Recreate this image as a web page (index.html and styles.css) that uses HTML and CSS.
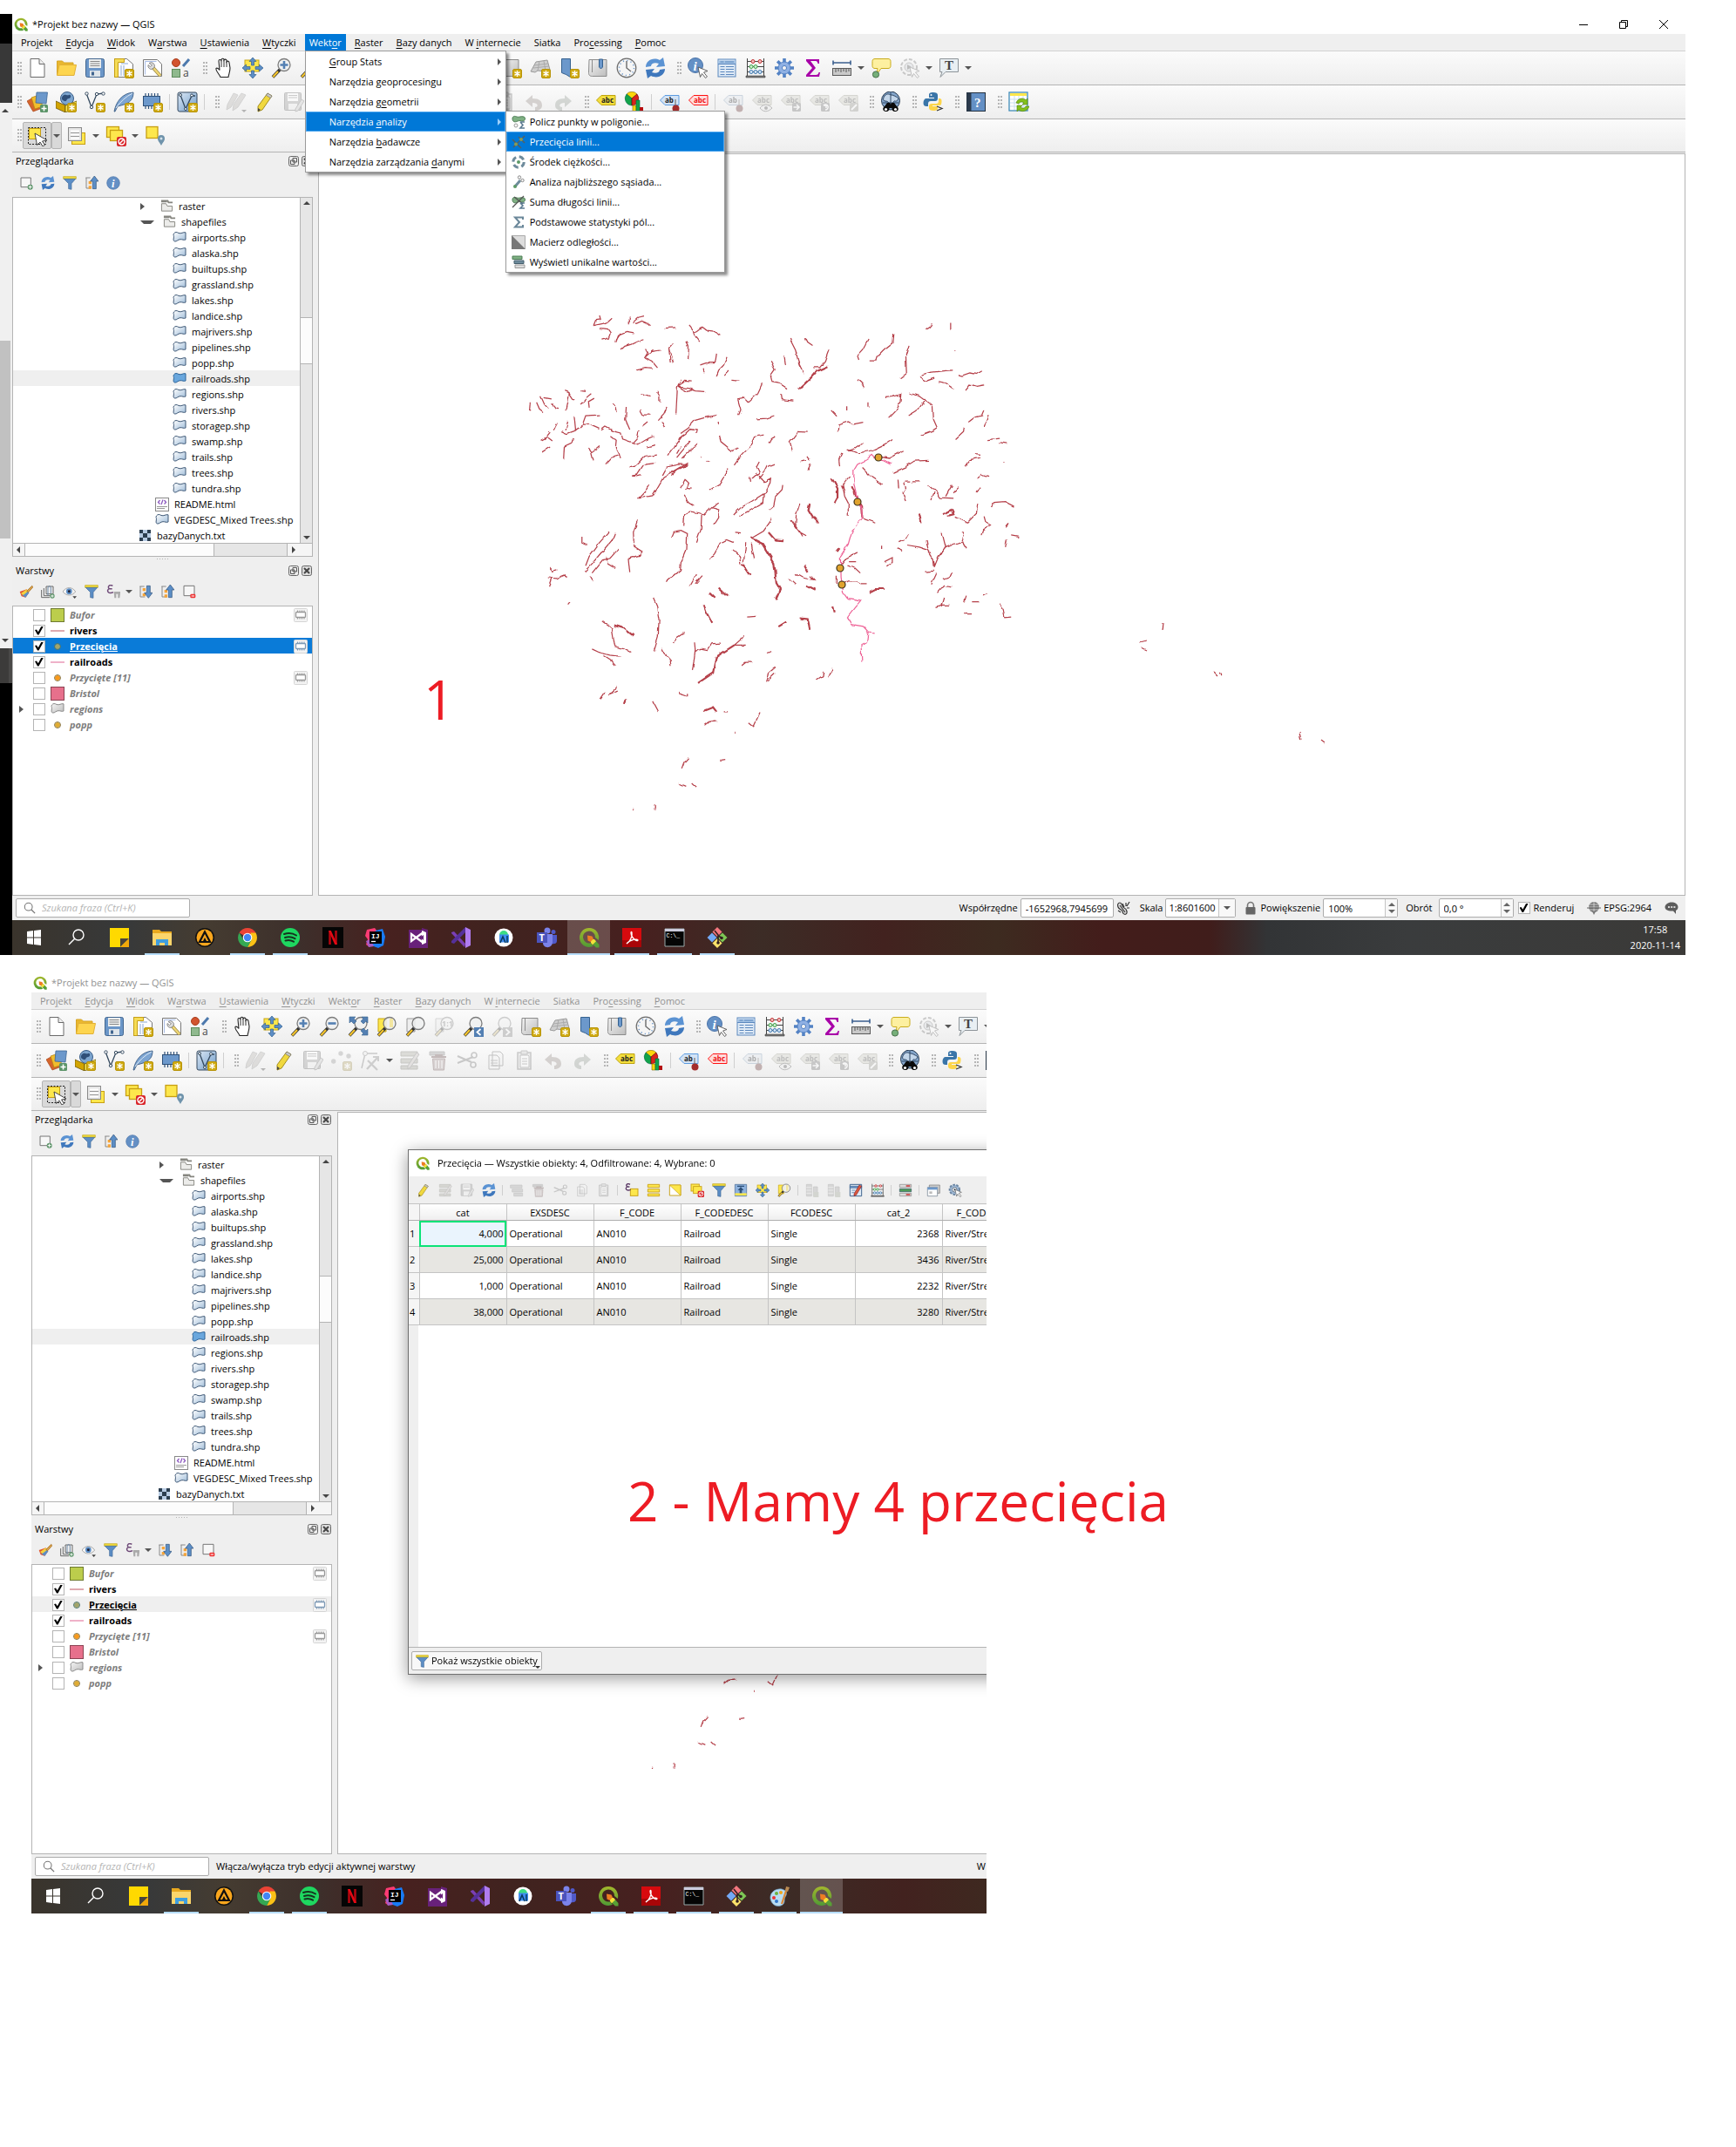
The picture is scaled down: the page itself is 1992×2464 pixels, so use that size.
FILE: index.html
```html
<!DOCTYPE html>
<html lang="pl">
<head>
<meta charset="utf-8">
<title>QGIS – przecięcia linii</title>
<link rel="stylesheet" href="styles.css">
</head>
<body>
<svg class="sprite" aria-hidden="true">
<defs>
<linearGradient id="gq" x1="0" y1="0" x2="0" y2="1"><stop offset="0" stop-color="#a3b82c"/><stop offset="1" stop-color="#4f9a35"/></linearGradient>
<linearGradient id="gs" x1="0" y1="0" x2="1" y2="1"><stop offset="0" stop-color="#fff"/><stop offset="1" stop-color="#9dbbd8"/></linearGradient>
<linearGradient id="gg" x1="0" y1="0" x2="1" y2="1"><stop offset="0" stop-color="#f4f4f4"/><stop offset="1" stop-color="#bdbdbd"/></linearGradient>
<linearGradient id="gv" x1="0" y1="0" x2="1" y2="1"><stop offset="0" stop-color="#dce8f5"/><stop offset="1" stop-color="#6f9bc8"/></linearGradient>
<filter id="rough" x="0" y="0" width="100%" height="100%"><feTurbulence type="fractalNoise" baseFrequency="0.12" numOctaves="1" seed="4"/><feDisplacementMap in="SourceGraphic" scale="5" xChannelSelector="R" yChannelSelector="G"/></filter>
</defs>
<symbol id="badge" viewBox="0 0 24 24"><rect x="13.5" y="13.5" width="10" height="10" rx="1.5" fill="#d0ab12" stroke="#b8940a"/><path d="M18.500 15v7M15.500 16.700l6 3.600M15.500 20.300l6-3.600" stroke="#fff" stroke-width="1.400"/></symbol>
<symbol id="mag" viewBox="0 0 24 24"><path d="M10.500 13.500L2 22.500" stroke="#333" stroke-width="3.600"/><path d="M8 16L2.300 22.200" stroke="#f5c52c" stroke-width="2.200"/><circle cx="15" cy="8.500" r="7" fill="#eef0f0" fill-opacity=".85" stroke="#7c7c7c" stroke-width="1.300"/></symbol>
<symbol id="qgis" viewBox="0 0 24 24"><path d="M12 1a11 11 0 1 0 5 20.800l-3.500-3.500A7 7 0 1 1 19 12l3.800 3A11 11 0 0 0 12 1z" fill="url(#gq)"/><path d="M14 14l4 0 5.500 6v3.500h-3.500L14 18z" fill="#58a036"/><path d="M14 14h4l2 2.200-4 4-2-2.200z" fill="#f3e03a"/><path d="M10 9.500l5.500 1 1.500 3-3.500 3.500-3-1.500z" fill="#ee7d22"/></symbol>
<symbol id="new" viewBox="0 0 24 24"><path d="M4 1.500h10l6 6v15H4z" fill="#fff" stroke="#6a6a6a"/><path d="M14 1.500v6h6" fill="#eee" stroke="#6a6a6a"/></symbol>
<symbol id="open" viewBox="0 0 24 24"><path d="M1.500 20V4h6l2 2H20v4" fill="#e9b72f" stroke="#d6a527"/><path d="M1.500 20.500L4 8.500h19.500L21 20.500z" fill="#fdd54f" stroke="#e2b135"/></symbol>
<symbol id="save" viewBox="0 0 24 24"><rect x="1.500" y="1.500" width="21" height="21" rx="2" fill="#6b96c8" stroke="#42668f"/><rect x="5" y="2" width="14" height="10" fill="#eceeee"/><path d="M6.500 4.500h11M6.500 7h11M6.500 9.500h11" stroke="#888"/><rect x="6" y="15" width="12" height="7" fill="#dfe5ea"/><rect x="8" y="16.500" width="3" height="4" fill="#42668f"/></symbol>
<symbol id="layout" viewBox="0 0 24 24"><path d="M1.500 1.500h14l7 6v15h-21z" fill="#fff" stroke="#777"/><path d="M1.500 1.500h11v4h-7v17h-4z" fill="#f5dc57" stroke="#c79f13"/><path d="M9 7h8M9 9v12M12 9v12" stroke="#8ba9d6"/><use href="#badge"/></symbol>
<symbol id="layman" viewBox="0 0 24 24"><path d="M1.500 2.500h16l5 5v14h-21z" fill="#fff" stroke="#777"/><path d="M3.500 19.500v-15h13" fill="none" stroke="#a9bde6"/><path d="M12 11l9 10" stroke="#9c8a4a" stroke-width="4"/><path d="M13 12l8 9" stroke="#f0d774" stroke-width="2.400"/><path d="M8 6.500a4 4 0 0 1 6 5l-3 2a4 4 0 0 1-4-5l2.500 2 2-1.800z" fill="#ddd" stroke="#777" stroke-width=".8"/></symbol>
<symbol id="style" viewBox="0 0 24 24"><circle cx="6" cy="6" r="4.500" fill="#d2542f" stroke="#a83d1d"/><rect x="1.500" y="13.500" width="9" height="9" fill="#8fb98e" stroke="#5c8a5b"/><path d="M14 10l7-8" stroke="#4d79ad" stroke-width="3"/><text x="14" y="22" font-size="12" font-family="Open Sans" fill="#444">a</text></symbol>
<symbol id="pan" viewBox="0 0 24 24"><path d="M8 22.500C6 18 2 15 3 12.500c1-1 3 .5 4 2L6 4c0-2 2.500-2 3 0V2.500c.5-2 3-1.500 3 0V3c1-1.500 3-1 3 .5V5c1-1.500 3-1 3 1l1 6c0 4-1.500 7-2 10.500z" fill="#fff" stroke="#222" stroke-width="1.100"/><path d="M9 4v7M12 3v8M15 5v6" stroke="#333"/></symbol>
<symbol id="pansel" viewBox="0 0 24 24"><rect x="3" y="3" width="16" height="13" fill="#fde74c" stroke="#c7a615"/><path d="M12 0l4 4.500h-2.500V9h-3V4.500H8zM12 24l4-4.500h-2.500V15h-3v4.500H8zM0 12l4.500-4v2.500H9v3H4.500V16zM24 12l-4.500-4v2.500H15v3h4.500V16z" fill="#5c8ec6" stroke="#35618f" stroke-width=".7"/></symbol>
<symbol id="zoom-in" viewBox="0 0 24 24"><use href="#mag"/><path d="M15 4v9M10.500 8.500h9" stroke="#5480b3" stroke-width="2.600"/></symbol>
<symbol id="zoom-out" viewBox="0 0 24 24"><use href="#mag"/><path d="M10.500 8.500h9" stroke="#5480b3" stroke-width="2.600"/></symbol>
<symbol id="zoom-full" viewBox="0 0 24 24"><use href="#mag"/><path d="M2 1h7L7 3l3 3-3 3-3-3-2 2zM23 1v7l-2-2-3 3-3-3 3-3-2-2zM23 22h-7l2-2-3-3 3-3 3 3 2-2z" fill="#5480b3" stroke="#35618f" stroke-width=".6"/></symbol>
<symbol id="zoom-sel" viewBox="0 0 24 24"><path d="M2 3h9v15H2z" fill="#fde74c" stroke="#c7a615"/><use href="#mag"/><path d="M15 3h4v10h-4z" fill="#f3e6a0"/></symbol>
<symbol id="zoom-layer" viewBox="0 0 24 24"><path d="M2 3h9v15H2z" fill="#eee" stroke="#999"/><use href="#mag"/></symbol>
<symbol id="zoom-native" viewBox="0 0 24 24"><path d="M2 3h9v15H2z" fill="#eee" stroke="#999"/><use href="#mag"/><text x="9" y="12" font-size="9" font-weight="700" font-family="Open Sans" fill="#777">1:1</text></symbol>
<symbol id="zoom-last" viewBox="0 0 24 24"><use href="#mag"/><rect x="13" y="13" width="11" height="11" fill="#5480b3"/><path d="M20.500 15l-4 3.500 4 3.500" stroke="#fff" stroke-width="1.800" fill="none"/></symbol>
<symbol id="zoom-next" viewBox="0 0 24 24"><use href="#mag"/><rect x="13" y="13" width="11" height="11" fill="#888"/><path d="M16.500 15l4 3.500-4 3.500" stroke="#fff" stroke-width="1.800" fill="none"/></symbol>
<symbol id="mapview" viewBox="0 0 24 24"><path d="M2 2.500h18v19H5.500c-4 0-4-3-4-4z" fill="url(#gg)" stroke="#8b8b8b"/><path d="M5.500 3v14" stroke="#8b8b8b"/><use href="#badge"/></symbol>
<symbol id="map3d" viewBox="0 0 24 24"><path d="M1 16L7 5l13-2 3 11-6 2-8-1-3 2z" fill="#cfcfcf" stroke="#9a9a9a"/><path d="M5 9l16-2M4 12l18-2M11 4l-2 11M16 4l2 11" stroke="#aaa" fill="none"/><use href="#badge"/></symbol>
<symbol id="bookmark-new" viewBox="0 0 24 24"><path d="M3.500 1.500h10v21l-5-3-5-2z" fill="#6c98cb" stroke="#35618f"/><use href="#badge"/></symbol>
<symbol id="bookmarks" viewBox="0 0 24 24"><path d="M2 2.500h20v19H5.500c-4 0-4-3-4-4z" fill="url(#gg)" stroke="#8b8b8b"/><path d="M5.500 3v14" stroke="#8b8b8b"/><path d="M13.500 2h4v9l-2 2-2-2z" fill="#6c98cb" stroke="#35618f"/></symbol>
<symbol id="clock" viewBox="0 0 24 24"><circle cx="12" cy="12" r="10.800" fill="#f5f5f5" stroke="#6b6b6b" stroke-width="1.200"/><circle cx="12" cy="12" r="8.500" fill="none" stroke="#6c98cb" stroke-width="1.500" stroke-dasharray="1.200 3.250"/><path d="M12 4v8l5 4" fill="none" stroke="#6b6b6b" stroke-width="1.400"/></symbol>
<symbol id="refresh" viewBox="0 0 24 24"><path d="M1 11C1 4 9-1 17 3l4-3 2 10-10 1 3-4C11 5 7 7 7 10z" fill="#5b93d3"/><path d="M23 13c0 7-8 12-16 8l-4 3-2-10 10-1-3 4c5 2 9 0 9-3z" fill="#3f78bd"/></symbol>
<symbol id="identify" viewBox="0 0 24 24"><circle cx="9" cy="9" r="8.500" fill="#6490c5" stroke="#4a73a8"/><text x="6.500" y="15" font-size="15" font-weight="700" font-style="italic" font-family="Liberation Serif" fill="#fff">i</text><use href="#arrowcur"/></symbol>
<symbol id="arrowcur" viewBox="0 0 24 24"><path d="M12 11l11 4.500-4.500 1.500 4 5-2 1.500-4-5-2 4z" fill="#fff" stroke="#555" stroke-width=".9"/></symbol>
<symbol id="table" viewBox="0 0 24 24"><rect x="2" y="2" width="20" height="20" fill="#dfeaf6" stroke="#5b87bd"/><path d="M2 3.500h20v4H2z" fill="#a3c2e4"/><path d="M2 7.500h20" stroke="#5b87bd"/><path d="M4.500 5h4M10 5h10M4.500 10.500h5M4.500 13.500h5M4.500 16.500h5M4.500 19.500h5M11 10.500h9M11 13.500h9M11 16.500h9M11 19.500h9" stroke="#5b87bd"/></symbol>
<symbol id="abacus" viewBox="0 0 24 24"><path d="M2.500 1v20M21.500 1v20M2.500 4.500h19M2.500 10.500h19M2.500 16.500h19" stroke="#444" fill="none"/><path d="M1 21h22v2H1z" fill="#777" stroke="#444" stroke-width=".6"/><g fill="#f3c2c2" stroke="#c22f2f"><circle cx="9" cy="4.500" r="2"/><circle cx="17" cy="4.500" r="2"/></g><g fill="#cff0cf" stroke="#3fa04a"><circle cx="7" cy="10.500" r="2"/><circle cx="12" cy="10.500" r="2"/></g><g fill="#d3e4f5" stroke="#3d78b0"><circle cx="7" cy="16.500" r="2"/><circle cx="12" cy="16.500" r="2"/><circle cx="17" cy="16.500" r="2"/></g></symbol>
<symbol id="gear" viewBox="0 0 24 24"><g stroke="#5382c4" stroke-width="3.600"><path d="M12 1v22M1 12h22M4.200 4.200l15.600 15.600M19.800 4.200L4.200 19.800"/></g><circle cx="12" cy="12" r="7" fill="#8fb0e3" stroke="#5382c4"/><circle cx="12" cy="12" r="2.600" fill="#f2f2f2" stroke="#5382c4"/></symbol>
<symbol id="sigma" viewBox="0 0 24 24"><path d="M4 2h15v5h-1.500C17 4.500 16 4 14 4H9l6 8-7 8h7c2.500 0 3-1 3.500-3H20l-1 5H4v-2l7-8-7-8z" fill="#a800a8"/></symbol>
<symbol id="measure" viewBox="0 0 24 24"><path d="M2 6h20M2 3.500v5M22 3.500v5" stroke="#3b5f8f" stroke-width="1.600"/><rect x="1.500" y="12.500" width="21" height="8" fill="#c9c9c9" stroke="#5a5a5a"/><path d="M5 13v4M8 13v3M11 13v4M14 13v3M17 13v4M20 13v3" stroke="#555"/></symbol>
<symbol id="tip" viewBox="0 0 24 24"><path d="M5 1.500h15c2 0 3 1 3 3v5c0 2-1 3-3 3h-8l-5 7 1-7H5c-2 0-3-1-3-3v-5c0-2 1-3 3-3z" fill="#fdf0a0" stroke="#c9ac1c"/><circle cx="6" cy="19.500" r="3.600" fill="#76b07a" stroke="#47704a"/></symbol>
<symbol id="action" viewBox="0 0 24 24"><circle cx="11" cy="11" r="9" fill="#f2f2f2" stroke="#777" stroke-width="2" stroke-dasharray="4 2"/><circle cx="11" cy="11" r="5" fill="#ccd6e3" stroke="#777"/><path d="M9 8l5 3-5 3z" fill="#555"/><use href="#arrowcur"/></symbol>
<symbol id="textann" viewBox="0 0 24 24"><path d="M1.500 1.500h21v15H8L2 22.500l2-6H1.500z" fill="#e9eff3" stroke="#8d9499"/><text x="7" y="14" font-size="15" font-family="Liberation Serif" font-weight="700" fill="#444">T</text></symbol>
<symbol id="sources" viewBox="0 0 24 24"><path d="M0 11l9-5 6 14-8 3z" fill="#d5652b" stroke="#a8461c" stroke-width=".7"/><path d="M5 7l9-3 4 13-9 3z" fill="#f1bd2e" stroke="#b4870f" stroke-width=".7"/><path d="M11 1h12.500l-1.500 13-12-1z" fill="#6c98cb" stroke="#3e6796" stroke-width=".8"/><rect x="15" y="15" width="9" height="9" rx="1.500" fill="#5b9468"/><path d="M19.500 16.500v6M16.500 19.500h6" stroke="#fff" stroke-width="1.600"/></symbol>
<symbol id="geopackage" viewBox="0 0 24 24"><circle cx="13" cy="8" r="7.500" fill="#7ea6cf" stroke="#3a5e88"/><path d="M8 5c3-3 4 0 7-1s3 4 0 4-2 4-5 3-4-3-2-6z" fill="#2f4f78"/><path d="M0 11l11 5v8L0 19z" fill="#d2a400" stroke="#5a4700" stroke-width=".7"/><path d="M11 16l13-5v8l-13 5z" fill="#fde74c" stroke="#5a4700" stroke-width=".7"/><use href="#badge"/></symbol>
<symbol id="shapefile" viewBox="0 0 24 24"><path d="M2 2l6 16L14 3l8-1" fill="none" stroke="#34495e" stroke-width="1.300"/><g fill="#fff" stroke="#34495e"><circle cx="2.500" cy="2.500" r="1.700"/><circle cx="14" cy="3" r="1.700"/><circle cx="21.500" cy="2.500" r="1.700"/><circle cx="8" cy="18" r="1.700"/></g><use href="#badge"/></symbol>
<symbol id="feather" viewBox="0 0 24 24"><path d="M1 23C3 12 10 2 23 1c0 6-2 9-6 12-4 2-8 3-12 4L2 23z" fill="#7da5d2" stroke="#2e5078" stroke-width=".8"/><path d="M3 19C8 12 14 6 22 2" stroke="#dfeaf6" fill="none"/><use href="#badge"/></symbol>
<symbol id="memory" viewBox="0 0 24 24"><path d="M4 2v18M7.500 2v18M11 2v18M14.500 2v18M18 2v18" stroke="#2e5078" stroke-width="1.200"/><rect x="1.500" y="5.500" width="19" height="11" fill="#6c98cb" stroke="#2e5078"/><use href="#badge"/></symbol>
<symbol id="virtual" viewBox="0 0 24 24"><rect x="1" y="1" width="22" height="22" rx="2" fill="url(#gv)" stroke="#34495e"/><path d="M4 4l6 16L17 5h4" fill="none" stroke="#34495e" stroke-width="1.300"/><g fill="#fff" stroke="#34495e"><circle cx="4" cy="4" r="1.500"/><circle cx="17" cy="4.500" r="1.500"/><circle cx="10" cy="20" r="1.500"/></g><use href="#badge"/></symbol>
<symbol id="pencil" viewBox="0 0 24 24"><path d="M15 2l5 3L9 21l-5 2 0-6z" fill="#f0d83f" stroke="#9a8414" stroke-width=".9"/><path d="M15 2l5 3-1.500 2.500-5-3z" fill="#c9c9c9" stroke="#777" stroke-width=".7"/><path d="M4 19l3 2-3 2z" fill="#444"/></symbol>
<symbol id="pencils" viewBox="0 0 24 24"><path d="M9 2l5 2L6 18l-5 3 1-6zM18 2l5 2-9 14-6 4 1-7z" fill="#b9b2a7" stroke="#8c8c8c" stroke-width=".9"/><path d="M18 21h6l-3 3z" fill="#444"/></symbol>
<symbol id="save-edits" viewBox="0 0 24 24"><rect x="1.500" y="1.500" width="19" height="20" rx="1" fill="#999" stroke="#666"/><rect x="5" y="2" width="12" height="9" fill="#fff"/><path d="M6 4.500h10M6 7h10" stroke="#777"/><rect x="6" y="14" width="10" height="7" fill="#eee"/><path d="M21 9l3 2-7 11-3 1v-3z" fill="#ccc" stroke="#777"/></symbol>
<symbol id="add-point" viewBox="0 0 24 24"><g fill="#999"><circle cx="2.700" cy="13" r="2.700"/><circle cx="11" cy="4" r="2.700"/><circle cx="20" cy="7" r="2.700"/></g><use href="#badge"/></symbol>
<symbol id="vertex" viewBox="0 0 24 24"><path d="M2 21L6 4h14" fill="none" stroke="#777" stroke-width="1.400"/><circle cx="6" cy="4" r="2.500" fill="#eee" stroke="#777"/><path d="M9 12l11 11M20 9L8 22" stroke="#888" stroke-width="2.400"/><path d="M15 8l6 0 0 5" stroke="#888" stroke-width="2" fill="none"/></symbol>
<symbol id="multiedit" viewBox="0 0 24 24"><path d="M2 2h19v5H2zM2 10h19v5H2zM2 18h19v4H2z" fill="#aaa98d" stroke="#77765f"/><path d="M20 3l3 2-10 15-3 2v-4z" fill="#cbbdb4" stroke="#777"/></symbol>
<symbol id="trash" viewBox="0 0 24 24"><path d="M2 2h17v4H2z" fill="#999" stroke="#777"/><path d="M4 8h17M9 8V6h7v2" stroke="#844" stroke-width="1.800" fill="none"/><path d="M5.500 10h14l-1 13h-12z" fill="#b98f8f" stroke="#844"/><path d="M9 12v9M12.500 12v9M16 12v9" stroke="#fff"/></symbol>
<symbol id="cut" viewBox="0 0 24 24"><path d="M1 7l16 7M1 15l18-7" stroke="#777" stroke-width="2"/><circle cx="20" cy="6" r="3" fill="none" stroke="#777" stroke-width="1.600"/><circle cx="19" cy="17" r="3" fill="none" stroke="#777" stroke-width="1.600"/></symbol>
<symbol id="copy" viewBox="0 0 24 24"><path d="M8 2h9l3 3v13H8zM4 6h9l3 3v13H4z" fill="#f5f5f5" stroke="#666"/><path d="M6 12h8M6 15h8M6 18h8" stroke="#777"/></symbol>
<symbol id="paste" viewBox="0 0 24 24"><path d="M4 3h15v19H4z" fill="#ddd" stroke="#777" stroke-width="1.500"/><path d="M7 6h9l1 1v13H7z" fill="#fff" stroke="#777"/><path d="M8 1h7v4H8z" fill="#ccc" stroke="#777"/><path d="M9 10h6M9 13h6M9 16h6" stroke="#777"/></symbol>
<symbol id="undo" viewBox="0 0 24 24"><path d="M2 11l8-7v4c8 0 11 3 11 8 0 4-4 6-8 6v-4c4 0 4-5-3-5v5z" fill="#a48e80"/></symbol>
<symbol id="redo" viewBox="0 0 24 24"><path d="M22 11l-8-7v4c-8 0-11 3-11 8 0 4 4 6 8 6v-4c-4 0-4-5 3-5v5z" fill="#8fa08f"/></symbol>
<symbol id="tag" viewBox="0 0 24 24"><path d="M7 4.500h16v11H7L1.500 10z"/></symbol>
<symbol id="label" viewBox="0 0 24 24"><use href="#tag" fill="#f3de3c" stroke="#bda20e"/><text x="7" y="13" font-size="8" font-weight="700" font-family="Open Sans" fill="#222">abc</text></symbol>
<symbol id="label-pin" viewBox="0 0 24 24"><use href="#tag" fill="#d3e3f5" stroke="#5b9be0"/><text x="7" y="13" font-size="8" font-weight="700" font-family="Open Sans" fill="#222">ab</text><path d="M19 9v9" stroke="#888" stroke-width="1.500"/><circle cx="19.500" cy="19.500" r="4" fill="#a32b2b"/></symbol>
<symbol id="label-red" viewBox="0 0 24 24"><use href="#tag" fill="#fdd" stroke="#f11"/><text x="7" y="13" font-size="8" font-weight="700" font-family="Open Sans" fill="#e11">abc</text></symbol>
<symbol id="label-show" viewBox="0 0 24 24"><use href="#tag" fill="#cfcfb4" stroke="#99997a"/><text x="7" y="13" font-size="8" font-weight="700" font-family="Open Sans" fill="#555">abc</text><path d="M10 19c4-5 9-5 14 0-5 5-10 5-14 0z" fill="#eee" stroke="#555"/><circle cx="17" cy="19" r="2" fill="#555"/></symbol>
<symbol id="label-move" viewBox="0 0 24 24"><use href="#tag" fill="#cfcfb4" stroke="#99997a"/><text x="7" y="13" font-size="8" font-weight="700" font-family="Open Sans" fill="#555">abc</text><rect x="14" y="13" width="10" height="10" rx="1.500" fill="#777"/><path d="M15.500 18h6M19 15l3 3-3 3" stroke="#fff" stroke-width="1.500" fill="none"/></symbol>
<symbol id="label-rotate" viewBox="0 0 24 24"><use href="#tag" fill="#cfcfb4" stroke="#99997a"/><text x="7" y="13" font-size="8" font-weight="700" font-family="Open Sans" fill="#555">abc</text><rect x="14" y="13" width="10" height="10" rx="1.500" fill="#777"/><path d="M17 16a3 3 0 1 1 2 5M17 16h3v3" stroke="#fff" stroke-width="1.500" fill="none"/></symbol>
<symbol id="label-edit" viewBox="0 0 24 24"><use href="#tag" fill="#cfcfb4" stroke="#99997a"/><text x="7" y="13" font-size="8" font-weight="700" font-family="Open Sans" fill="#555">abc</text><rect x="14" y="13" width="10" height="10" rx="1.500" fill="#998"/><path d="M16 21l6-6" stroke="#fff" stroke-width="2"/></symbol>
<symbol id="diagram" viewBox="0 0 24 24"><path d="M9 8L3 3a8 8 0 0 1 12 0z" fill="#fdd60a" stroke="#7a6500" stroke-width=".6"/><path d="M9 8v8A8 8 0 0 1 3 3z" fill="#12a34a" stroke="#064" stroke-width=".6"/><path d="M9 8l6-5a8 8 0 0 1-6 13z" fill="#d9241c" stroke="#600" stroke-width=".6"/><path d="M10 16h4v7h-4z" fill="#fdd60a" stroke="#7a6500" stroke-width=".6"/><path d="M14 10h4v13h-4z" fill="#12a34a" stroke="#064" stroke-width=".6"/><path d="M18 18h4v5h-4z" fill="#b51010"/></symbol>
<symbol id="metasearch" viewBox="0 0 24 24"><circle cx="12" cy="10.500" r="10.500" fill="#86a7cc" stroke="#23364d"/><path d="M5 5c4-4 6-1 8-1s5 2 7 3-1 5-3 4-2 4-5 3-3-3-6-3-3-3-1-6zM3 13h18M12 1v18" fill="#c3d6ea" stroke="#2f4662"/><path d="M5 17l3-4h3l1 2 1-2h3l3 4c3 2 2 6-1.500 6s-4-2-4-4h-3c0 2-.5 4-4 4S2 19 5 17z" fill="#0b0b0b"/><circle cx="6.500" cy="20.500" r="1.600" fill="#fff"/><circle cx="17.500" cy="20.500" r="1.600" fill="#fff"/></symbol>
<symbol id="python" viewBox="0 0 24 24"><path d="M12 1C8 1 7 2 7 4v3h6v1H4c-2 0-3.500 2-3.500 5S2 17 4 17h2v-3c0-2 1-3 3-3h5c2 0 3-1 3-3V4c0-2-2-3-5-3z" fill="#3a75a8"/><circle cx="9.500" cy="4" r="1" fill="#fff"/><path d="M12 22c4 0 5-1 5-3v-2h-6v-1h8c2 0 2.500-2 2.500-5S20 8 18 8v3c0 2-1 3-3 3h-5c-2 0-3 1-3 3v2c0 2 2 3 5 3z" fill="#fdd54a"/><path d="M16 17l6 2.500-6 2.500" stroke="#333" stroke-width="1.300" fill="none"/></symbol>
<symbol id="help" viewBox="0 0 24 24"><rect x="1.500" y="1.500" width="21" height="21" fill="#6490c5" stroke="#23303f"/><path d="M1.500 1.500h5v21h-5z" fill="#2b3a4c"/><text x="10" y="18" font-size="15" font-family="Liberation Serif" font-weight="700" fill="#fff">?</text></symbol>
<symbol id="reload" viewBox="0 0 24 24"><rect x="1" y="1" width="21" height="21" fill="#fff" stroke="#3f8bb8" stroke-width="1.300"/><path d="M2 2h19v3H2z" fill="#fde74c"/><path d="M2 9h19M2 13h19M2 17h19M7 5v16M12 5v16M17 5v16" stroke="#c9dff0"/><path d="M9 13c2-6 9-6 11-3l2-2v7h-6l2-2c-3-2-5-1-6 1zM24 17c-2 6-9 7-12 4l-2 2v-7h6l-2 2c3 2 5 1 6-1z" fill="#83c01c" stroke="#4d7d08" stroke-width=".6"/></symbol>
<symbol id="select" viewBox="0 0 24 24"><rect x="1.500" y="2.500" width="20" height="19" fill="none" stroke="#222" stroke-dasharray="2 1.500"/><rect x="2.500" y="3.500" width="13" height="12" fill="#fde74c" stroke="#c79f13"/><path d="M9 9l14 8-5.500 1 3 4.500-2.500 1.500-3-5-3.500 3.500z" fill="#fff" stroke="#333" stroke-width=".9"/></symbol>
<symbol id="select-value" viewBox="0 0 24 24"><rect x="6.500" y="8.500" width="15" height="13" fill="#fde74c" stroke="#c79f13"/><rect x="2.500" y="2.500" width="15" height="15" fill="#e6e6e6" stroke="#8a8a8a"/><path d="M5 6.500h10M5 10.500h10M5 14.500h10" stroke="#fff" stroke-width="2"/><path d="M5 8.500h10M5 12.500h10" stroke="#999"/></symbol>
<symbol id="deselect" viewBox="0 0 24 24"><rect x="1.500" y="1.500" width="14" height="12" fill="#fde74c" stroke="#c79f13" stroke-width="1.300"/><rect x="5.500" y="5.500" width="14" height="12" fill="#fde74c" stroke="#c79f13" stroke-width="1.300"/><rect x="13" y="13" width="11" height="11" rx="2" fill="#d9252a"/><circle cx="18.500" cy="18.500" r="3.500" fill="none" stroke="#fff" stroke-width="1.400"/><path d="M16 21l5-5" stroke="#fff" stroke-width="1.400"/></symbol>
<symbol id="select-location" viewBox="0 0 24 24"><rect x="2" y="1.500" width="13" height="13" fill="#fde74c" stroke="#c79f13" stroke-width="1.300"/><path d="M19 23c-2-4-4-5-4-8a4 4 0 0 1 8 0c0 3-2 4-4 8z" fill="#6f93ab"/><circle cx="19" cy="15" r="1.500" fill="#d5e2ea"/></symbol>
<symbol id="add-layer" viewBox="0 0 24 24"><path d="M3 3h17v16H3z" fill="#f7f7f7" stroke="#777" stroke-width="1.500"/><circle cx="19" cy="19" r="4.500" fill="#5b9468"/><path d="M19 16v6M16 19h6" stroke="#fff" stroke-width="1.500"/></symbol>
<symbol id="remove-layer" viewBox="0 0 24 24"><path d="M3 2h18v17H3z" fill="#f7f7f7" stroke="#777" stroke-width="1.500"/><rect x="14" y="16" width="9" height="7" rx="2" fill="#e33"/><path d="M16 19.500h5" stroke="#fff" stroke-width="1.600"/></symbol>
<symbol id="filter" viewBox="0 0 24 24"><path d="M1 1h22v4H1z" fill="#f3de3c" stroke="#c0a41a"/><path d="M2 5h20l-7 8v10l-5-1v-9z" fill="#5c8ec6" stroke="#3e6796"/></symbol>
<symbol id="collapse" viewBox="0 0 24 24"><path d="M2 3h8M3 3v18h8" stroke="#888" stroke-width="1.500" fill="none"/><path d="M7 9h5v5H7zM7 17h5v5H7z" fill="#f6a53a"/><path d="M17 0l7 9h-4v13h-6V9h-4z" fill="#5c8ec6" stroke="#2e5078"/></symbol>
<symbol id="expand" viewBox="0 0 24 24"><path d="M2 3h8M3 3v18h8" stroke="#888" stroke-width="1.500" fill="none"/><path d="M7 6h5v5H7zM7 15h5v5H7z" fill="#f6a53a"/><path d="M17 23l7-9h-4V2h-6v12h-4z" fill="#5c8ec6" stroke="#2e5078"/></symbol>
<symbol id="info" viewBox="0 0 24 24"><circle cx="12" cy="12" r="11" fill="#6490c5" stroke="#4a73a8"/><text x="9" y="19" font-size="19" font-weight="700" font-style="italic" font-family="Liberation Serif" fill="#fff">i</text></symbol>
<symbol id="brush" viewBox="0 0 24 24"><path d="M1 12l12-4 4 6-6 8-7-2z" fill="#e2572f"/><path d="M5 18l9-8 3 4-6 8z" fill="#5c8ec6"/><path d="M3 15l10-7 3 3-9 7z" fill="#f4d13e"/><path d="M13 11l9-9 2 2-8 9z" fill="#d9a04c" stroke="#9c6a1d"/></symbol>
<symbol id="add-group" viewBox="0 0 24 24"><path d="M1 9v13h14M5 6v13h13" stroke="#666" stroke-width="1.500" fill="none"/><path d="M9 3h12v13H9z" fill="#eee" stroke="#666" stroke-width="1.500"/><path d="M12 18V6c0-5 5-5 5 0v9" stroke="#6f8ba8" stroke-width="1.500" fill="none"/><circle cx="19.500" cy="19.500" r="4" fill="#5b9468"/><path d="M19.500 17v5M17 19.500h5" stroke="#fff" stroke-width="1.400"/></symbol>
<symbol id="eye" viewBox="0 0 24 24"><path d="M0 12C6 3 16 3 22 12c-6 8-16 8-22 0z" fill="#f3f3f3" stroke="#aaa" stroke-width="1.500"/><circle cx="11" cy="11.500" r="5" fill="#5c8ec6"/><circle cx="11" cy="11.500" r="2.200" fill="#223"/><path d="M17 20h7l-3.500 4z" fill="#444"/></symbol>
<symbol id="epsilon" viewBox="0 0 24 24"><path d="M11 2C6-1 1 3 5 7c-6 3-1 10 7 6M5 7h5" fill="none" stroke="#6f4a78" stroke-width="2.200"/><path d="M13 12h11v3l-1 8h-3v-7h-3v7h-3z" fill="#aaa"/></symbol>
<symbol id="float" viewBox="0 0 12 12"><rect x=".5" y=".5" width="11" height="11" rx="2" fill="#eee" stroke="#666"/><path d="M5 2.500h4.500V7H5zM2.500 5H7v4.500H2.500z" fill="#eee" stroke="#555"/></symbol>
<symbol id="close" viewBox="0 0 12 12"><rect x=".5" y=".5" width="11" height="11" rx="2" fill="#ddd" stroke="#666"/><path d="M3 3l6 6M9 3L3 9" stroke="#444" stroke-width="2"/></symbol>
<symbol id="folder" viewBox="0 0 16 16"><path d="M1 1h8l1 2h5M1 2h7" stroke="#85857f" stroke-width="2" fill="none"/><path d="M1.500 13.500v-9H7l1.500 3h6v6z" fill="#ececea" stroke="#85857f"/></symbol>
<symbol id="shp" viewBox="0 0 16 16"><path d="M1.500 3C3 1 5 1.200 7 2.500c3 1.200 5-1.500 8-.700V10c-2 1-4-.500-6-.300-3 0-4 2.800-6.500 2.300C-.5 11 2.500 7.500 1 4.500z" fill="url(#gs)" stroke="#3e5876"/></symbol>
<symbol id="shp-on" viewBox="0 0 16 16"><path d="M1.500 3C3 1 5 1.200 7 2.500c3 1.200 5-1.500 8-.700V10c-2 1-4-.500-6-.300-3 0-4 2.800-6.500 2.300C-.5 11 2.500 7.500 1 4.500z" fill="#6aa7dd" stroke="#2c6398"/></symbol>
<symbol id="shp-gray" viewBox="0 0 16 16"><path d="M1.500 3C3 1 5 1.200 7 2.500c3 1.200 5-1.500 8-.700V10c-2 1-4-.500-6-.300-3 0-4 2.800-6.500 2.300C-.5 11 2.500 7.500 1 4.500z" fill="url(#gg)" stroke="#8a8a8a"/></symbol>
<symbol id="html" viewBox="0 0 16 16"><rect x=".5" y=".5" width="15" height="15" fill="#fff" stroke="#888"/><path d="M5.500 3L3.500 5.500l2 2M10.500 3l2 2.500-2 2M9 2.500L7 8" stroke="#8e5bc0" fill="none" stroke-width="1.300"/><path d="M2 10.500h12M2 12.500h9" stroke="#999"/></symbol>
<symbol id="grid" viewBox="0 0 13 13"><path d="M0 0h13v13H0z" fill="#b7cbe3"/><path d="M0 0h4v4H0zM9 0h4v4H9zM4 4h5v5H4zM0 9h4v4H0zM9 9h4v4H9z" fill="#2c3e50"/></symbol>
<symbol id="chip" viewBox="0 0 16 16"><rect x=".5" y=".5" width="15" height="15" rx="1" fill="#f3f3f3" stroke="#d5d5d5"/><path d="M4.500 2.500v10M7 2.500v10M9.500 2.500v10M12 2.500v10" stroke="currentColor"/><rect x="2.500" y="4.500" width="11" height="6" rx="1" fill="#fff" stroke="currentColor" stroke-width="1.300"/></symbol>
<symbol id="m-count" viewBox="0 0 16 16"><path d="M1 4c0-3 3-3 5-2s5-1 8 0 1 5-1 5-4-1-6 0-6 2-6-3z" fill="#7fb083" stroke="#4d7d55"/><circle cx="5" cy="12" r="2" fill="none" stroke="#999"/><path d="M10 8h5M10 8l3 3.500-3 3.500h5" stroke="#5d7c93" stroke-width="1.600" fill="none"/></symbol>
<symbol id="m-cross" viewBox="0 0 16 16"><path d="M1 5l10 10M2 14L15 1M8 2l7 7" stroke="#56605e" stroke-width="1.500"/><circle cx="5" cy="10.500" r="2" fill="#8a9a55"/><circle cx="11" cy="5" r="2" fill="#8a9a55"/></symbol>
<symbol id="m-mean" viewBox="0 0 16 16"><circle cx="8" cy="8" r="6.200" fill="none" stroke="#6f8c9c" stroke-width="3" stroke-dasharray="6 3.740"/><circle cx="8" cy="8" r="2" fill="#5d9a67"/></symbol>
<symbol id="m-near" viewBox="0 0 16 16"><path d="M4 13l6-7" stroke="#6f8c9c" stroke-width="3"/><circle cx="4" cy="13" r="2" fill="#5d9a67"/><circle cx="9" cy="2.500" r="1.700" fill="#fff" stroke="#888"/><circle cx="12.500" cy="6" r="1.700" fill="#fff" stroke="#888"/></symbol>
<symbol id="m-sum" viewBox="0 0 16 16"><path d="M1 5c0-3 3-3 5-2s5-1 8 0 1 5-1 5-4-1-6 0-6 2-6-3z" fill="#7fb083" stroke="#4d7d55"/><path d="M1 14L14 1M3 2l10 8" stroke="#555" stroke-width="1.300"/><path d="M10 9h5M10 9l3 3-3 3h5" stroke="#5d7c93" stroke-width="1.600" fill="none"/></symbol>
<symbol id="m-stat" viewBox="0 0 16 16"><path d="M13 5V2.500H4L9 8l-5 5.500h9V11" stroke="#6a8799" stroke-width="2" fill="none"/></symbol>
<symbol id="m-matrix" viewBox="0 0 16 16"><path d="M.5.500h15v15H.5z" fill="#ddd" stroke="#aaa"/><path d="M0 0l16 16H0z" fill="#777"/></symbol>
<symbol id="m-unique" viewBox="0 0 16 16"><path d="M1 1h11v3.500H1z" fill="#7fb083" stroke="#4d7d55"/><path d="M3 6h11v3.500H3z" fill="#6f8c9c" stroke="#46606e"/><path d="M4 11h11v3.500H4z" fill="#ddd" stroke="#999"/></symbol>
<symbol id="extent" viewBox="0 0 16 16"><path d="M4 2c3 0 2 5 5 6s4 6 2 7-4-1-4-3-4-2-5-5 0-5 2-5z" fill="#ddd" stroke="#333" stroke-width="1.200"/><path d="M4 5l6 8M7 3l2 4M11 2v4M15 1l-3 5M15 8h-3M2 11l3 2" stroke="#333" stroke-width="1.200"/></symbol>
<symbol id="lock" viewBox="0 0 16 16"><path d="M4.500 8V5a3.500 3.500 0 0 1 7 0v3" fill="none" stroke="#777" stroke-width="1.600"/><rect x="2.500" y="7" width="11" height="8.500" rx="1" fill="#666"/></symbol>
<symbol id="crs" viewBox="0 0 16 16"><circle cx="8" cy="7" r="6" fill="#777"/><path d="M2 7h12M8 1v12M3 4h10M3 10h10" stroke="#ddd" stroke-width=".8"/><path d="M0 8h16" stroke="#666"/><path d="M6 12h4l-2 4z" fill="#777"/></symbol>
<symbol id="bubble" viewBox="0 0 16 16"><path d="M8 1.500c4 0 7.500 2 7.500 5.500 0 2-1 3-2.500 4v4l-3-3.500C4 12 .5 10 .5 7S4 1.500 8 1.500z" fill="#5c5c5c"/><path d="M4 7h2M7.200 7h2M10.400 7h2" stroke="#fff" stroke-width="1.600"/></symbol>
<symbol id="lens" viewBox="0 0 24 24"><circle cx="14" cy="9" r="6" fill="none" stroke="currentColor" stroke-width="1.400"/><path d="M9.500 13.500L3 20" stroke="currentColor" stroke-width="1.400"/></symbol>
<symbol id="lens-left" viewBox="0 0 16 16"><circle cx="6.500" cy="6.500" r="5" fill="none" stroke="#777" stroke-width="1.200"/><path d="M10 10l5 5" stroke="#777" stroke-width="1.500"/></symbol>
<symbol id="field-new" viewBox="0 0 24 24"><path d="M2 2h9v20H2zM14 6h7v16h-7z" fill="#aaa" stroke="#777"/><path d="M2 7h9M2 12h9M2 17h9" stroke="#fff"/><rect x="14" y="15" width="9" height="9" fill="#9a8"/></symbol>
<symbol id="row-add" viewBox="0 0 24 24"><path d="M1 3h20v5H1zM4 10h18v5H4zM7 17h15v5H7z" fill="#aaa" stroke="#777"/></symbol>
<symbol id="expr-sel" viewBox="0 0 24 24"><rect x="9.500" y="9.500" width="13" height="12" fill="#fde74c" stroke="#c79f13" stroke-width="1.400"/><path d="M9 2C4-1 1 3 4 6c-5 3 0 8 6 5M4 6h4" fill="none" stroke="#5b3a66" stroke-width="2"/></symbol>
<symbol id="select-all" viewBox="0 0 24 24"><path d="M2 2h20v5H2zM2 10h20v5H2zM2 18h20v4H2z" fill="#fde74c" stroke="#c79f13" stroke-width="1.300"/></symbol>
<symbol id="invert" viewBox="0 0 24 24"><path d="M2 3h19v18H2z" fill="#fff" stroke="#c79f13" stroke-width="1.400"/><path d="M2 3h19v18z" fill="#fde74c" stroke="#c79f13"/></symbol>
<symbol id="to-top" viewBox="0 0 24 24"><path d="M2 2h20v20H2z" fill="#8db1dd" stroke="#42668f"/><path d="M2 17h20v4H2z" fill="#fde74c"/><path d="M6 4h12v2H6zM12 6l5 6h-3v5h-4v-5H7z" fill="#2e5078"/></symbol>
<symbol id="field-edit" viewBox="0 0 24 24"><path d="M2 2h20v20H2z" fill="#dfeaf6" stroke="#42668f" stroke-width="1.500"/><path d="M2 5h20v3H2zM5 12h6M5 16h5" fill="#6c98cb" stroke="#42668f"/><path d="M18 3l4 2-9 15-4 2v-4z" fill="#d9573c" stroke="#712" stroke-width=".8"/></symbol>
<symbol id="format" viewBox="0 0 24 24"><path d="M2 2h20v5H2zM2 17h20v5H2z" fill="#ddd" stroke="#888"/><path d="M2 9.500h20v5H2z" fill="#4c9b58" stroke="#356"/><path d="M13 4.500h7M13 19.500h7" stroke="#c33" stroke-width="2"/></symbol>
<symbol id="dock" viewBox="0 0 24 24"><path d="M5 3h18v14H5z" fill="#ccc" stroke="#777"/><path d="M2 7h17v15H2z" fill="#fff" stroke="#678"/><path d="M2 7h17v4H2z" fill="#6c98cb"/><path d="M5 14h5v4H5z" fill="#bbb"/></symbol>
<symbol id="act" viewBox="0 0 24 24"><circle cx="11" cy="11" r="8.500" fill="#9fb9d6" stroke="#6d87a3" stroke-width="3" stroke-dasharray="4 2"/><circle cx="11" cy="11" r="4" fill="#fff" stroke="#345"/><path d="M10 9l4 2-4 2z" fill="#234"/><use href="#arrowcur"/></symbol>
<symbol id="t-win" viewBox="0 0 24 24"><path d="M4 5l7-1v7.500H4zM12 4l8-1v8.500h-8zM4 12.500h7V20l-7-1zM12 12.500h8V21l-8-1z" fill="#fff"/></symbol>
<symbol id="t-note" viewBox="0 0 24 24"><path d="M1 1h22v12l-9 10H1z" fill="#ffd900"/><path d="M13 13h10L13 23z" fill="#4a453a"/><path d="M23 13v10H13z" fill="#f1a80a"/></symbol>
<symbol id="t-folder" viewBox="0 0 24 24"><path d="M1 3h8l2 2h12v16H1z" fill="#e8a81f"/><path d="M1 7h22v14H1z" fill="#fbd56b"/><path d="M5 21v-7h14v7h-4v-3H9v3z" fill="#3f9ede"/></symbol>
<symbol id="t-aimp" viewBox="0 0 24 24"><circle cx="12" cy="12" r="11" fill="#111"/><circle cx="12" cy="12" r="9.500" fill="#f9a61d"/><path d="M12 5.500l6 11.500H6z" fill="none" stroke="#111" stroke-width="2.200"/><path d="M12 12l2 4h-4z" fill="#111"/></symbol>
<symbol id="t-chrome" viewBox="0 0 24 24"><path d="M12 12L2.500 6.500A11 11 0 0 1 21.500 6.500z" fill="#ea4335"/><path d="M21.500 6.500A11 11 0 0 1 12 23l4.500-9-1-7.500z" fill="#fbc116"/><path d="M2.500 6.500A11 11 0 0 0 12 23l4.700-8.500L7 14z" fill="#34a853"/><circle cx="12" cy="12" r="5.300" fill="#fff"/><circle cx="12" cy="12" r="4.200" fill="#4285f4"/></symbol>
<symbol id="t-spotify" viewBox="0 0 24 24"><circle cx="12" cy="12" r="11" fill="#1ed760"/><path d="M5 8c5-1.500 10-1 14 1.500M6 12c4-1.200 8-.8 11.500 1.200M6.500 15.500c3-.9 6.500-.6 9.500 1.200" fill="none" stroke="#16321f" stroke-width="2" stroke-linecap="round"/></symbol>
<symbol id="t-netflix" viewBox="0 0 24 24"><path d="M0 0h24v24H0z" fill="#050505"/><path d="M8.500 4v16M15.500 4v16" stroke="#b1060f" stroke-width="2.600"/><path d="M7 4h2.800L17 20h-2.800z" fill="#e50914"/></symbol>
<symbol id="t-idea" viewBox="0 0 24 24"><path d="M2 3l9-2 3 4-8 9-1 9-4-3 2-6-3-4z" fill="#fc3b73"/><path d="M12 4l8-2 3 9-2 10-6 3-8-3z" fill="#187bf5"/><path d="M1 16l5-2 4 8-6 1z" fill="#a55cc5"/><path d="M5 5h14v14H5z" fill="#000"/><path d="M7 16.500h5" stroke="#fff" stroke-width="1.300"/><text x="7" y="13" font-size="8" font-weight="700" font-family="Liberation Mono" fill="#fff">IJ</text></symbol>
<symbol id="t-vs" viewBox="0 0 24 24"><path d="M1 3h15V1l7 2v21H1z" fill="#68217a"/><path d="M4 8l13 9.500V6.500L4 16z" fill="none" stroke="#fff" stroke-width="2.200"/><path d="M16 4l5 2v12l-5 2z" fill="#fff"/><path d="M18 9v6l-4-3z" fill="#68217a"/></symbol>
<symbol id="t-vs2" viewBox="0 0 24 24"><path d="M1 6l3-1 13 14-1 4L1 7z" fill="#7a3fb5"/><path d="M1 18l3 1L17 6l0-6L1 16z" fill="#55309a"/><path d="M17 0l6 3v18l-6 3z" fill="#b07cf0"/></symbol>
<symbol id="t-android" viewBox="0 0 24 24"><circle cx="12" cy="12" r="10.500" fill="#fff"/><path d="M7 9a5 5 0 0 1 10 0z" fill="#3ddc84"/><path d="M7 8.500h11v9H7z" fill="#3f8cf0"/><path d="M8 18l3-7 3 7M16 10v8" stroke="#083a5e" stroke-width="1.500" fill="none"/></symbol>
<symbol id="t-teams" viewBox="0 0 24 24"><circle cx="13" cy="4" r="3.500" fill="#7b83eb"/><circle cx="20" cy="5.500" r="2.500" fill="#5059c9"/><path d="M16 9h8v7c0 4-6 4-7 2z" fill="#5059c9"/><path d="M8 8h11v9c0 8-11 8-11 1z" fill="#7b83eb"/><path d="M1 6h12v12H1z" fill="#4b53bc"/><text x="3.500" y="16" font-size="11" font-weight="700" font-family="Open Sans" fill="#fff">T</text></symbol>
<symbol id="t-pdf" viewBox="0 0 24 24"><path d="M1 1h22v22H1z" fill="#d70a0e"/><path d="M1 15h22v8H1z" fill="#a90608"/><path d="M6 19c4-2 7-9 6-13-1-2-2 2 1 6s6 4 6 3c0-2-9-1-13 4z" fill="none" stroke="#fff" stroke-width="1.300"/></symbol>
<symbol id="t-cmd" viewBox="0 0 24 24"><path d="M1 2h22v20H1z" fill="#050505" stroke="#9aa"/><path d="M1 2h22v3H1z" fill="#ccd"/><text x="2.500" y="12" font-size="6.500" font-family="Liberation Mono" fill="#fff">C:\_</text></symbol>
<symbol id="t-git" viewBox="0 0 24 24"><path d="M12 0l5.500 5.500L12 11 6.500 5.500z" fill="#f4777f"/><path d="M6 6.500l5.500 5.500L6 17.500.5 12z" fill="#74a9f5"/><path d="M18 6.500l5.500 5.500-5.500 5.500-5.500-5.500z" fill="#7dc655"/><path d="M12 13l5.500 5.500L12 24l-5.500-5.500z" fill="#fbe36b"/><path d="M9 4l4 5v10M13 10l4 2" stroke="#312020" stroke-width="1.600" fill="none"/><circle cx="17" cy="12.500" r="1.800" fill="#312020"/><circle cx="13" cy="18" r="1.800" fill="#312020"/></symbol>
<symbol id="t-paint" viewBox="0 0 24 24"><path d="M2 15C1 8 8 3 15 4c7 2 6 6 4 9s1 8-5 10S3 21 2 15z" fill="#b9ddf3" stroke="#6c9cc0" stroke-width=".7"/><circle cx="9" cy="9" r="2" fill="#6cb33e"/><circle cx="14" cy="8" r="2" fill="#f0a51d"/><circle cx="6" cy="14" r="2" fill="#e33"/><circle cx="9" cy="18" r="2" fill="#37c"/><path d="M21 3l-6 18" stroke="#d98736" stroke-width="2.200"/><path d="M19 6l1-5 4 1-2 5z" fill="#b98b54"/></symbol>
<symbol id="map" viewBox="0 0 1568 850">
<g filter="url(#rough)"><g transform="translate(195 163) scale(.4082 .3827)" fill="none" stroke="#b5404a" stroke-width="1.250">
<path vector-effect="non-scaling-stroke" d="M294 88L300 72L312 70M308 58L312 74M294 88L320 82L336 76L346 66M314 96L332 98L341 112L336 126L317 131M395 64V84M408 78L420 66L436 62M414 82L430 74L442 80L452 88M494 96L526 94M357 138L364 118L386 108L408 112M370 112L358 132M370 162L382 150L400 144L416 136L432 130M563 86L574 100L578 120L590 136M574 108L586 104L600 92L612 102L628 104L642 112L652 120M556 132L562 152L560 190M518 142L508 156L514 180L518 198M506 160L510 196M440 158L446 170L438 184L460 194L474 212M448 172L462 160M440 182L456 166L482 162M414 222L440 216L460 218M594 206L610 200L636 200L640 172M603 216l2 12M669 182L660 206L646 222L640 238M676 222L662 238M682 252L704 254"/>
<path vector-effect="non-scaling-stroke" d="M846 128L862 162L872 206L884 232M890 126L896 140L910 150M830 176L834 206M792 194L804 220L792 238L796 258L818 262L838 276M956 160L944 196L930 214L912 214M1066 128L1050 160L1036 176L1040 188M1136 112L1134 140L1110 160L1090 182L1088 194L1070 194M1248 82L1240 92L1228 102M1298 82V102M1311 164h3M1181 146L1172 176L1174 232L1156 246M1214 236L1240 228L1280 224L1304 222M1210 240L1230 254L1252 246M1262 256L1282 260L1304 276M1318 234L1330 238L1352 230L1370 234L1386 224M1340 280L1352 264L1372 270L1392 266M1036 250L1048 262L1054 272"/>
<path vector-effect="non-scaling-stroke" d="M540 250L530 274L528 310L526 354M532 272L550 252L570 254M534 272L560 276L580 284L608 286M534 272L556 286L572 280M768 262L756 290L728 318L718 306L700 310L708 340L702 356M822 296L824 310L856 314M472 284L480 300V318M430 294L452 302M116 318L114 346M134 318L142 338L152 346M146 300L156 324L168 338M156 304L176 308M178 322L186 334L196 336M214 284L226 290L222 320L218 340M222 286L240 314M258 284l14 2M290 292L274 306L258 324M296 306L280 316L282 334M346 322L356 334L358 348M386 332L384 370L396 400M426 340L434 356L452 356M500 332L492 352L476 370M486 378L494 394M182 402L192 380M204 404L220 412L240 404L262 388L272 358L312 356M240 360L244 404M222 374L216 402M264 384L284 386L310 398M316 402L328 392L350 404L372 410L376 428L418 444L440 430L462 420M422 402L418 422L402 440M172 408L160 424L146 432M164 424L176 434M148 468L172 452M236 426L232 440L212 450L210 490M278 452L288 468L294 492M288 470L312 450M344 420L358 432L356 452L366 472L370 488M366 478L346 484L328 506"/>
<path vector-effect="non-scaling-stroke" d="M538 412L560 396L580 372L606 364L640 356M530 430L552 412L568 396L586 400L584 412M548 412L522 452L502 480M566 434L528 484M588 440L542 486M540 450L528 472M645 376v8M754 368L780 366L802 358M430 390L446 376M446 452L470 446M470 476L436 482L414 506L396 512M472 500L432 506L410 542L400 542L430 534M420 606L440 584L450 566M420 606L460 598L490 544L560 500M560 506L536 504L500 512L488 536M560 506L530 520L510 540M648 420L652 436L684 464L700 454M770 416L746 422L734 450L708 480L692 504M804 420L786 440M896 408L868 406L846 436L854 466M878 496L894 492M906 500L896 522M894 478l8 12M668 516V530L650 562L622 580M552 548L538 576M552 550L562 560L556 576L570 578M552 598L560 618L574 628M760 494L752 510L760 528L740 546M804 502L784 510L778 524L760 548M734 542L736 556M750 530L774 556L792 546L790 562M790 560L776 590L740 614L708 634L688 656M772 594L770 618L736 640L704 660M826 566L824 580L806 600L800 630L788 640M594 484l4 4M614 494l4 4"/>
<path vector-effect="non-scaling-stroke" d="M962 342L978 360M1006 330v12M1068 318v16M1112 304L1130 302L1158 294L1156 320L1144 344L1124 366M1182 290L1210 300L1248 330L1250 370L1260 394L1248 402L1214 416M1226 308L1202 344L1180 358M980 406L982 386L1010 376L1024 384L1052 378M1392 342L1386 358L1370 362L1348 380M1404 356L1392 392M1336 390L1334 408L1312 430M1404 430L1436 426M1434 438L1456 442M1006 460L1040 470L1076 462L1112 444L1132 430M1010 464L1030 456L1052 440M992 470L984 490L986 510M1100 482L1124 486L1148 472L1168 462M1236 492L1196 494L1170 512L1136 528M1050 516L1072 540L1104 564M1382 484L1352 490L1338 510M1366 472l14 2M1446 496h4M1374 546L1386 534L1404 540M1382 574L1372 590M1150 550L1152 576M1170 554h14M1190 556h22M1168 556L1172 576L1164 590L1172 614M1236 568L1256 584L1270 604L1306 606M1252 588L1242 614M1284 600L1302 566M1306 590L1320 574M1412 630L1420 618L1450 616L1476 630M1374 622L1370 652L1344 680L1310 662M1392 660L1396 676L1412 686L1388 702L1384 716M1460 680l-6 14M1468 718L1488 722M1456 730L1452 752M1180 712L1172 726L1152 736M1146 756L1164 764M1176 746L1210 752L1232 760L1250 790L1252 812M1230 732L1234 756M1252 812L1264 780L1284 754L1310 742L1332 734L1340 756M1274 710L1284 752L1270 776M1328 704L1334 714L1328 732M1104 748v10M1112 796L1134 784V798L1120 810"/>
<path vector-effect="non-scaling-stroke" d="M1014 540L994 564L1000 600L1010 620V658M990 566L1000 590M1050 666L1086 680M874 622L864 654L862 684L882 720M850 672L872 706L892 718M548 686L550 656L570 646L592 650L606 656L626 634L646 620M598 656L596 700L584 736M626 634L646 640V664L634 684M514 722L520 706L540 702L558 712L556 760L540 800L538 820L498 856M418 670L406 710L408 750L428 764L426 776L392 786L396 830M338 706L310 740L282 780L272 808M356 710L350 726L310 776L290 802L268 826M364 758L340 786L320 790L290 830M326 780L334 800L356 814M264 724V740L276 746M170 812L180 824L192 820M166 844L190 846L214 836L216 844M176 846L168 868M284 840L292 854M686 738L668 730L650 740L634 770L618 790M690 708L710 710M796 668L772 704L738 726M686 760L704 778L708 804M722 740L716 800M738 744L746 788M584 834L566 868M600 838L580 862M228 916l-6 8M462 906L472 930L478 970L476 1020L464 1062M318 974L346 996L354 1050L380 1058L400 1070M290 1058L310 1068L340 1076L370 1080M322 1078L340 1090L356 1108M486 1054L500 1080L510 1092L512 1106M548 1010L528 1024L520 1042M578 1038L580 1060L576 1096L572 1118M578 1066L596 1056L614 1060L624 1042L650 1040M718 1020L690 1046L722 1046M726 962L750 960M860 832L880 844L914 850L904 838M844 846L864 866M990 806L1004 786L1036 768M1012 796L1032 796M1008 808L1028 814L1044 830M976 838v24M996 866L1010 854L1034 854L1046 862L1062 862"/>
<path vector-effect="non-scaling-stroke" d="M1226 826L1252 824M1258 832L1244 864M1302 828L1296 842L1276 850M1304 870L1280 866L1258 892M1278 904L1272 926L1296 926M1258 934L1274 928M1342 898L1336 918M1358 916L1380 916M1386 896l12 -6M1338 950h18M1434 920L1446 940L1450 964L1468 962M710 1108L722 1098L738 1098M784 1070L796 1064M806 1112L786 1130L778 1156M804 1130L782 1152M922 1150L938 1138L940 1126M966 1118L954 1144M314 1208L328 1186M338 1194L362 1170M336 1196L362 1184M460 1212L476 1244M532 1190L556 1200M558 1192v8M658 1246h16M606 1286L618 1276L640 1272M732 1280L744 1290L762 1248M689 1310h3M560 1384L548 1398L542 1416M650 1394L662 1392M534 1464L552 1472M570 1458L584 1472M466 1524v14M404 1540h3"/>
<path vector-effect="non-scaling-stroke" stroke-width="2.200" d="M954 210L920 226L904 246L872 278M964 546L980 576V604L972 620M1020 570L1034 604L1046 630L1050 666M902 622L898 640L912 664L928 680M738 726L768 742L802 800L808 860L818 878L806 910M712 804L734 838M786 708L804 730L828 732M646 874L672 900M620 890L636 906M604 926L612 950L628 982M350 986L380 996L406 1018M690 1046L638 1082L630 1130L588 1160M814 988L836 974M876 966L896 968L902 1000M886 806L898 828M892 866L918 880M976 768L986 756M1068 888L1086 878L1112 878M968 930L972 948M386 1208L382 1220M602 1244L630 1232L640 1246M1210 652L1216 680M1274 654L1300 640L1306 654L1290 658"/>
<path vector-effect="non-scaling-stroke" stroke="#ee6497" d="M1130 502L1108 490L1090 488L1078 474L1062 490L1036 504L1026 522V560L1034 604L1048 640L1050 668L1020 706L1010 744L988 780L990 840L996 886L1010 906L1048 912L1030 934L1008 964L1020 984L1052 990L1066 1006L1082 1008M1066 1006L1062 1036L1046 1044L1048 1096"/>
</g>
<path fill="none" stroke="#b5404a" stroke-width="1.250" d="M942 560l8-2M944 566l6 3M968 546l1-8M1026 594l4 4M1033 594l4 4M1125 664l2 8M1150 672l4 3"/></g>
<g fill="#e0a32e" stroke="#3a3018" stroke-width="1.200"><circle cx="642" cy="348" r="4"/><circle cx="618" cy="399" r="4"/><circle cx="598" cy="475" r="4"/><circle cx="600" cy="494" r="4"/></g>
</symbol>
</svg>

<template id="docks-template">
  <section class="dock">
    <header class="dock-title"><h2>Przeglądarka</h2><button aria-label="Odepnij"><svg><use href="#float"/></svg></button><button aria-label="Zamknij"><svg><use href="#close"/></svg></button></header>
    <div class="dock-tools" data-tools="add-layer refresh filter collapse info"></div>
    <div class="tree-box">
      <div class="tree-view">
        <ul class="tree"></ul>
        <div class="vscroll"><i class="up"></i><b></b><i class="down"></i></div>
      </div>
      <div class="hscroll"><i class="left"></i><b></b><span></span><i class="right"></i></div>
    </div>
  </section>
  <div class="splitter"></div>
  <section class="dock">
    <header class="dock-title"><h2>Warstwy</h2><button aria-label="Odepnij"><svg><use href="#float"/></svg></button><button aria-label="Zamknij"><svg><use href="#close"/></svg></button></header>
    <div class="dock-tools" data-tools="brush add-group eye filter epsilon v expand collapse remove-layer"></div>
    <ul class="layers">
      <li class="off"><label><input type="checkbox"><span class="sym square lime"></span>Bufor</label><svg class="mem"><use href="#chip"/></svg></li>
      <li><label><input type="checkbox" checked><span class="sym line"></span>rivers</label></li>
      <li class="current"><label><input type="checkbox" checked><span class="sym dot olive"></span><u>Przecięcia</u></label><svg class="mem"><use href="#chip"/></svg></li>
      <li><label><input type="checkbox" checked><span class="sym line pink"></span>railroads</label></li>
      <li class="off"><label><input type="checkbox"><span class="sym dot orange"></span>Przycięte [11]</label><svg class="mem"><use href="#chip"/></svg></li>
      <li class="off"><label><input type="checkbox"><span class="sym square rose"></span>Bristol</label></li>
      <li class="off group"><label><input type="checkbox"><svg class="sym"><use href="#shp-gray"/></svg>regions</label></li>
      <li class="off"><label><input type="checkbox"><span class="sym dot"></span>popp</label></li>
    </ul>
  </section>
</template>

<main>
  <div class="shot">
    <div class="backdrop"><i class="bd-top"></i><i class="bd-dark"></i><div class="bd-scroll"><i class="up"></i><b></b><i class="down"></i></div><i class="bd-dark short"></i></div>
    <section class="window">
      <header class="titlebar"><svg><use href="#qgis"/></svg><h1>*Projekt bez nazwy — QGIS</h1>
        <div class="controls">
          <button aria-label="Minimalizuj"><svg viewBox="0 0 12 12"><path d="M1 6.500h10" stroke="#000"/></svg></button>
          <button aria-label="Przywróć"><svg viewBox="0 0 12 12"><path d="M1.500 3.500h7v7h-7zM3.500 3.500v-2h7v7h-2" fill="none" stroke="#000"/></svg></button>
          <button aria-label="Zamknij"><svg viewBox="0 0 12 12"><path d="M1 1l10 10M11 1L1 11" stroke="#000"/></svg></button>
        </div>
      </header>
      <nav class="menubar">
        <button>Pro<u>j</u>ekt</button><button><u>E</u>dycja</button><button><u>W</u>idok</button><button>W<u>a</u>rstwa</button><button><u>U</u>stawienia</button><button><u>W</u>tyczki</button>
        <div class="opened"><button class="active">Wekt<u>o</u>r</button>
          <div class="menu">
            <button><u>G</u>roup Stats</button>
            <button>Narzędzia <u>g</u>eoprocesingu</button>
            <button>Narzędzia g<u>e</u>ometrii</button>
            <button class="active">Narzędzia <u>a</u>nalizy</button>
            <button>Narzędzia <u>b</u>adawcze</button>
            <button>Narzędzia zarządzania <u>d</u>anymi</button>
            <div class="menu submenu">
              <button><svg><use href="#m-count"/></svg>Policz punkty w poligonie...</button>
              <button class="active"><svg><use href="#m-cross"/></svg>Przecięcia linii...</button>
              <button><svg><use href="#m-mean"/></svg>Środek ciężkości...</button>
              <button><svg><use href="#m-near"/></svg>Analiza najbliższego sąsiada...</button>
              <button><svg><use href="#m-sum"/></svg>Suma długości linii...</button>
              <button><svg><use href="#m-stat"/></svg>Podstawowe statystyki pól...</button>
              <button><svg><use href="#m-matrix"/></svg>Macierz odległości...</button>
              <button><svg><use href="#m-unique"/></svg>Wyświetl unikalne wartości...</button>
            </div>
          </div>
        </div>
        <button><u>R</u>aster</button><button><u>B</u>azy danych</button><button>W <u>i</u>nternecie</button><button>Siatka</button><button>Pro<u>c</u>essing</button><button><u>P</u>omoc</button>
      </nav>
      <div class="toolbars"></div>
      <div class="workspace">
        <aside class="docks"></aside>
        <div class="canvas"><svg class="map"><use href="#map"/></svg><p class="note one">1</p></div>
      </div>
      <footer class="statusbar">
        <label class="search"><svg><use href="#lens-left"/></svg><input type="search" placeholder="Szukana fraza (Ctrl+K)" aria-label="Szukana fraza"></label>
        <div class="status-right">
          <label for="coord">Współrzędne</label><input id="coord" class="field coord" value="-1652968,7945699">
          <svg class="s16 after-field"><use href="#extent"/></svg>
          <label for="scale">Skala</label><span class="combo"><select id="scale" class="field"><option>1:8601600</option></select></span>
          <svg class="s16 lock"><use href="#lock"/></svg>
          <label for="zoom">Powiększenie</label><span class="spin"><input id="zoom" class="field" value="100%"><i class="arrows"></i></span>
          <label for="rot" class="gap">Obrót</label><span class="spin"><input id="rot" class="field" value="0,0 °"><i class="arrows"></i></span>
          <label class="render"><input type="checkbox" checked>Renderuj</label>
          <button class="crs"><svg class="s16"><use href="#crs"/></svg>EPSG:2964</button>
          <button aria-label="Komunikaty"><svg class="s16"><use href="#bubble"/></svg></button>
        </div>
      </footer>
      <div class="taskbar" data-apps="t-win lens t-note t-folder* t-aimp t-chrome* t-spotify* t-netflix t-idea t-vs t-vs2 t-android t-teams qgis@ t-pdf* t-cmd* t-git*"><div class="clock"><time>17:58</time><time>2020-11-14</time></div></div>
    </section>
  </div>

  <div class="shot second">
    <section class="window inactive">
      <header class="titlebar"><svg><use href="#qgis"/></svg><h1>*Projekt bez nazwy — QGIS</h1></header>
      <nav class="menubar">
        <button>Pro<u>j</u>ekt</button><button><u>E</u>dycja</button><button><u>W</u>idok</button><button>W<u>a</u>rstwa</button><button><u>U</u>stawienia</button><button><u>W</u>tyczki</button><button>Wekt<u>o</u>r</button><button><u>R</u>aster</button><button><u>B</u>azy danych</button><button>W <u>i</u>nternecie</button><button>Siatka</button><button>Pro<u>c</u>essing</button><button><u>P</u>omoc</button>
      </nav>
      <div class="toolbars"></div>
      <div class="workspace">
        <aside class="docks"></aside>
        <div class="canvas"><svg class="map"><use href="#map"/></svg>
          <section class="dialog">
            <header class="dialog-title"><svg><use href="#qgis"/></svg><h2>Przecięcia — Wszystkie obiekty: 4, Odfiltrowane: 4, Wybrane: 0</h2></header>
            <div class="dialog-tools" data-tools="pencil multiedit! save-edits! refresh | row-add! trash! cut! copy! paste! | expr-sel select-all invert deselect filter to-top pansel zoom-sel | field-new! field-new! field-edit abacus | format | dock act"></div>
            <div class="grid-area">
              <table>
                <thead><tr><th></th><th>cat</th><th>EXSDESC</th><th>F_CODE</th><th>F_CODEDESC</th><th>FCODESC</th><th>cat_2</th><th>F_CODEDESC</th></tr></thead>
                <tbody>
                  <tr><th>1</th><td class="num cell">4,000</td><td>Operational</td><td>AN010</td><td>Railroad</td><td>Single</td><td class="num">2368</td><td>River/Stream</td></tr>
                  <tr><th>2</th><td class="num">25,000</td><td>Operational</td><td>AN010</td><td>Railroad</td><td>Single</td><td class="num">3436</td><td>River/Stream</td></tr>
                  <tr><th>3</th><td class="num">1,000</td><td>Operational</td><td>AN010</td><td>Railroad</td><td>Single</td><td class="num">2232</td><td>River/Stream</td></tr>
                  <tr><th>4</th><td class="num">38,000</td><td>Operational</td><td>AN010</td><td>Railroad</td><td>Single</td><td class="num">3280</td><td>River/Stream</td></tr>
                </tbody>
              </table>
            </div>
            <footer class="dialog-foot"><button><svg><use href="#filter"/></svg>Pokaż wszystkie obiekty<i></i></button></footer>
          </section>
        </div>
      </div>
      <footer class="statusbar">
        <label class="search"><svg><use href="#lens-left"/></svg><input type="search" placeholder="Szukana fraza (Ctrl+K)" aria-label="Szukana fraza"></label>
        <p class="message">Włącza/wyłącza tryb edycji aktywnej warstwy</p><span class="edge">W</span>
      </footer>
      <div class="taskbar" data-apps="t-win lens t-note t-folder* t-aimp t-chrome* t-spotify* t-netflix t-idea t-vs t-vs2 t-android t-teams qgis* t-pdf* t-cmd* t-git* t-paint* qgis@"></div>
    </section>
    <p class="note two">2 - Mamy 4 przecięcia</p>
  </div>
</main>
<script src="script.js"></script>
</body>
</html>
```

FILE: styles.css
```css
* { box-sizing: border-box; }
body { margin: 0; background: #fff; color: #000; font: 11px/18px "Open Sans", "Noto Sans", sans-serif; }
h1, h2, p, ul { margin: 0; padding: 0; font-size: inherit; font-weight: 400; list-style: none; }
button, input, select { font: inherit; color: inherit; margin: 0; padding: 0; border: 0; background: none; }
button { display: flex; align-items: center; white-space: nowrap; }
svg { flex: none; display: block; }
.sprite { position: absolute; width: 0; height: 0; visibility: hidden; }
main { padding-top: 16px; }

.shot { display: flex; padding-right: 58px; position: relative; }
.shot.second { margin-top: 20px; padding: 0 860px 0 36px; }
.window { flex: 1; min-width: 0; background: #efefef; display: flex; flex-direction: column; }
.window.inactive { overflow: hidden; }

/* strip of the window lying behind */
.backdrop { width: 14px; background: #000; display: flex; flex-direction: column; }
.bd-top { height: 34px; }
.bd-dark { height: 68px; background: #383838; }
.bd-dark.short { height: 40px; background: #3c3b3a; border-right: 4px solid #4a4948; }
.bd-scroll { height: 626px; background: #f0f0f0; display: flex; flex-direction: column; align-items: center; padding: 7px 0; }
.bd-scroll b { width: 12px; height: 227px; margin: 262px 2px auto 0; flex: none; background: #c1c1c1; }
.bd-scroll i { margin-right: 3px; }
.up, .down, .left, .right { display: block; flex: none; border: 4px solid transparent; width: 0; height: 0; }
.up { border-width: 0 4px 4px; border-bottom-color: #444; }
.down { border-width: 4px 4px 0; border-top-color: #444; }
.left { border-width: 4px 4px 4px 0; border-right-color: #444; }
.right { border-width: 4px 0 4px 4px; border-left-color: #444; }

.titlebar { height: 23px; background: #fff; display: flex; align-items: center; padding-left: 2px; }
.titlebar svg { width: 16px; height: 16px; }
.titlebar h1 { margin-left: 5px; }
.inactive .titlebar h1, .inactive .menubar { color: #929292; }
.controls { margin-left: auto; display: flex; gap: 34px; padding-right: 19px; }
.controls svg { width: 12px; height: 12px; }

.menubar { height: 20px; border-bottom: 1px solid #d2d2d2; display: flex; padding-left: 5px; gap: 5px; }
.menubar > button, .opened > button { padding: 0 5px; height: 19px; }
.menubar u { text-underline-offset: 2px; }
.menubar button { gap: 0; white-space: pre; }
.menubar .active { background: #0078d7; color: #fff; }
.opened { position: relative; }
.menu { position: absolute; z-index: 5; left: 0; top: 19px; width: 231px; background: #fff; border: 1px solid #9a9a9a; box-shadow: 3px 3px 3px rgba(0,0,0,.45); }
.menu button { width: 100%; height: 23px; padding-left: 27px; color: #000; }
.menu .active { outline: 1px solid #4da6ef; outline-offset: -1px; color: #fff; }
.menu > button::after { content: ""; margin-left: auto; margin-right: 5px; border: 4px solid transparent; border-width: 4px 0 4px 4px; border-left-color: #555; }
.menu > button.active::after { border-left-color: #9cd0fb; }
.submenu { left: 229px; top: 68px; width: 252px; }
.submenu > button { padding-left: 6px; }
.submenu > button::after, .submenu > button.active::after { border-color: transparent; }
.submenu svg { width: 16px; height: 16px; margin-right: 5px; }

.toolbar { height: 39px; display: flex; align-items: center; overflow: hidden; background: linear-gradient(#fbfbfb, #eee); border-bottom: 1px solid #b4b4b4; }
.toolbar:last-child { height: 38px; }
.tool { flex: none; width: 33px; height: 31px; justify-content: center; }
.tool svg { width: 24px; height: 24px; }
.tool:disabled { opacity: .35; filter: grayscale(.6); }
.more { flex: none; width: 12px; height: 31px; justify-content: center; }
.more::before { content: ""; border: 4px solid transparent; border-width: 4px 4px 0; border-top-color: #555; }
.grip { flex: none; width: 12px; height: 17px; margin-left: 3px; background: radial-gradient(circle, #b5b5b5 1px, transparent 1px) 5px 0 / 4px 4px repeat-y, radial-gradient(circle, #b5b5b5 1px, transparent 1px) 8px 0 / 4px 4px repeat-y; margin-right: 1px; }
.grip:first-child { margin-left: 0; margin-right: 0; }
.sep { flex: none; width: 1px; height: 18px; margin: 0 3px; background: #cfcfcf; }
.pressed, .pressed + .more { background: #d9d9d9; border: 1px solid #b4b4b4; border-radius: 2px; }

.workspace { display: flex; }
.docks { width: 345px; margin-right: 6px; flex: none; }
.dock-title { height: 20px; display: flex; align-items: center; padding: 0 1px 0 4px; gap: 3px; }
.dock-title h2 { margin-right: auto; }
.dock-title svg { width: 12px; height: 12px; }
.dock-tools, .dialog-tools { display: flex; align-items: center; height: 31px; padding: 0 0 2px 3px; }
.splitter + .dock .dock-tools { height: 30px; }
.dock-tools .tool, .dialog-tools .tool { width: 25px; height: 22px; }
.dock-tools .tool svg, .dialog-tools .tool svg { width: 16px; height: 16px; }
.tree-box { background: #fff; border: 1px solid #b4b4b4; }
.tree-view { display: flex; }
.tree { flex: 1; }
.tree li { height: 18px; display: flex; align-items: center; gap: 6px; padding: 1px 0 0 183px; }
.tree svg { width: 16px; height: 16px; }
.tree .folder { padding-left: 146px; }
.tree .folder svg { width: 15px; }
.tree .folder::before { content: ""; width: 9px; margin-right: 3px; border: 4px solid transparent; border-width: 4px 0 4px 5px; border-left-color: #555; }
.tree .folder.opened-folder::before { width: 8px; margin-right: 4px; border-color: #555 transparent transparent; border-width: 4px 4px 0; }
.tree .file { padding-left: 163px; }
.tree .base { padding-left: 145px; }
.tree .base svg { width: 13px; height: 13px; margin-right: 1px; }
.tree .chosen { background: #efefef; }
.vscroll { width: 14px; border-left: 1px solid #b4b4b4; background: #e6e6e6; display: flex; flex-direction: column; align-items: center; padding: 4px 0; }
.vscroll b { width: 100%; height: 54px; margin: 129px 0 auto; background: #fcfcfc; border: 1px solid #b4b4b4; border-width: 1px 0; }
.hscroll { height: 15px; border-top: 1px solid #b4b4b4; background: #f5f5f5; display: flex; align-items: center; padding-left: 4px; }
.hscroll b { width: 218px; height: 100%; margin-left: 5px; background: #fcfcfc; border: 1px solid #b4b4b4; border-width: 0 1px; }
.hscroll span { flex: 1; height: 100%; background: #e6e6e6; border-right: 1px solid #b4b4b4; }
.hscroll .right { margin: 0 19px 0 5px; }
.splitter { height: 6px; background: radial-gradient(circle, #b5b5b5 1px, transparent 1px) 0 1px / 3px 3px repeat-x; width: 16px; margin: 0 auto; }

.layers { height: 333px; background: #fff; border: 1px solid #b4b4b4; font-weight: 700; }
.layers li { height: 18px; display: flex; align-items: center; padding: 1px 5px 0 23px; position: relative; }
.layers label { flex: 1; display: flex; align-items: center; gap: 6px; }
.layers .off { color: #7d7d7d; font-style: italic; }
.layers .group::before { content: ""; position: absolute; left: 7px; border: 4px solid transparent; border-width: 4px 0 4px 5px; border-left-color: #555; }
.layers .current { background: #0a7bd8; color: #fff; }
.inactive .layers .current { background: #efefef; color: #000; }
.layers .current .mem { color: #7d99b5; }
.mem { width: 16px; height: 16px; color: #999; }
.sym { flex: none; width: 16px; height: 16px; display: block; }
.square { border: 1px solid #6e7a30; }
.lime { background: #bccd4c; }
.rose { background: #e7708c; border-color: #8b4353; }
.line { height: 2px; background: #dfaab0; }
.line.pink { background: #efb2c9; }
.dot { width: 6px; height: 6px; margin: 0 5px; border-radius: 50%; background: #e0ac33; outline: 1px solid #8c7a4a; }
.dot.olive { background: #a3a56a; outline-color: #50786e; }
.dot.orange { background: #f99a1c; }
input[type=checkbox] { appearance: none; flex: none; width: 14px; height: 14px; background: #fff; border: 1px solid #b4b4b4; display: grid; place-items: center; }
input[type=checkbox]:checked::before { content: ""; width: 10px; height: 10px; background: #000; clip-path: polygon(0 45%, 20% 40%, 38% 68%, 75% 0, 100% 0, 45% 100%, 30% 100%); }

.canvas { flex: 1; min-width: 0; margin-top: 1px; background: #fff; border: 1px solid #b4b4b4; position: relative; overflow: hidden; }
.inactive .canvas { border-right: 0; }
.map { position: absolute; left: 0; top: 0; width: 1568px; height: 850px; }
.note { position: absolute; z-index: 6; color: #ed1c24; font-size: 62px; line-height: 80px; white-space: nowrap; }
.note.one { left: 120px; top: 585px; }
.note.two { left: 720px; top: 566px; }

.statusbar { height: 28px; display: flex; align-items: center; padding: 0 8px 0 4px; white-space: nowrap; }
.search { width: 200px; height: 22px; display: flex; align-items: center; gap: 7px; padding: 0 8px; background: #fff; border: 1px solid #acacac; border-radius: 2px; }
.search svg { width: 14px; height: 14px; }
.search input { flex: 1; min-width: 0; outline: 0; }
.search input::placeholder { font-style: italic; color: #b4b4b4; opacity: 1; }
.status-right { margin-left: auto; display: flex; align-items: center; gap: 3px; }
.field { height: 22px; background: #fff; border: 1px solid #acacac; border-radius: 2px; padding: 0 5px; appearance: none; width: 100%; }
.coord { width: 107px; }
.s16 { width: 16px; height: 16px; }
.after-field { margin-right: 8px; }
.lock { margin-left: 6px; }
.combo { width: 81px; position: relative; display: flex; }
.combo .field { padding: 0 3px; }
.combo::after { content: ""; position: absolute; right: 1px; top: 1px; width: 18px; height: 20px; border-left: 1px solid #c5c5c5; background: #f8f8f8; }
.combo::before { content: ""; position: absolute; z-index: 1; right: 6px; top: 9px; border: 4px solid transparent; border-width: 4px 4px 0; border-top-color: #555; }
.spin { width: 86px; position: relative; display: flex; }
.arrows { position: absolute; right: 1px; top: 1px; width: 14px; height: 20px; border-left: 1px solid #c5c5c5; background: #f8f8f8; display: flex; flex-direction: column; align-items: center; justify-content: center; gap: 4px; }
.arrows::before { content: ""; border: 4px solid transparent; border-width: 0 4px 4px; border-bottom-color: #666; }
.arrows::after { content: ""; border: 4px solid transparent; border-width: 4px 4px 0; border-top-color: #666; }
.gap { margin: 0 4px 0 6px; }
.render { display: flex; align-items: center; gap: 4px; margin: 0 12px 0 2px; }
.crs { gap: 3px; margin-right: 12px; }
.message { margin-left: 8px; }
.edge { margin-left: auto; margin-right: -7px; }

.taskbar { height: 40px; display: flex; color: #fff; background: linear-gradient(90deg, #3a342c, #37393a 130px, #453c31 220px, #3d2f2b 330px, #47211f 430px, #40231f 560px, #47201f 720px, #3c2c26 860px, #42221f 1000px, #3d2b20 1130px, #431d1b 1250px, #401d1b 1375px, #323436 1440px, #3a3c3d 1600px, #3b3a38); }
.app { width: 49px; height: 40px; justify-content: center; border-bottom: 2px solid transparent; padding: 2px 0 0; background-clip: padding-box; }
.app svg { width: 24px; height: 24px; }
.app.running { background: linear-gradient(#b5dcfa, #b5dcfa) 50% 100% / 40px 2px no-repeat border-box; }
.app.front { background: rgba(255,255,255,.2); border-color: #b5dcfa; }
.clock { margin-left: auto; padding: 2px 6px 0 0; display: flex; flex-direction: column; text-align: center; }

.dialog { position: absolute; left: 80px; top: 42px; width: 900px; height: 603px; background: #efefef; border: 1px solid #707070; box-shadow: 0 4px 18px rgba(0,0,0,.4); display: flex; flex-direction: column; }
.dialog-title { height: 30px; background: #fff; display: flex; align-items: center; gap: 9px; padding-left: 8px; }
.dialog-title svg { width: 16px; height: 16px; }
.dialog-tools { padding: 0 0 0 4px; }
.dialog-tools .sep { height: 12px; }
.grid-area { flex: 1; background: linear-gradient(90deg, #efefef 11px, #fff 11px); border-bottom: 1px solid #b4b4b4; }
table { table-layout: fixed; width: 711px; border-collapse: collapse; }
th, td { width: 100px; height: 30px; padding: 0 3px; font-weight: 400; text-align: left; border: 1px solid #c4c4c4; }
th:first-child { width: 12px; padding: 0 1px; background: #f5f5f5; border-left: 0; }
thead th { height: 19px; line-height: 17px; text-align: center; background: linear-gradient(#fff, #eee); border-bottom-color: #b0b0b0; }
tbody tr:nth-child(even) td { background: #e7e6e2; }
.num { text-align: right; }
.cell { background: #eaf4fd; outline: 2px solid #0be377; outline-offset: -2px; }
.dialog-foot { height: 30px; padding: 4px 3px; }
.dialog-foot button { height: 22px; width: 150px; padding-left: 4px; gap: 3px; background: #f8f8f8; border: 1px solid #acacac; border-radius: 2px; position: relative; }
.dialog-foot svg { width: 15px; height: 15px; }
.dialog-foot i { position: absolute; right: 1px; bottom: 1px; border: 3px solid transparent; border-width: 3px 3px 0; border-top-color: #333; }
```

FILE: script.js
```js
// Both windows share the same toolbars and side docks, so they are built once here.
const toolRows = [
  "grip new open save layout layman style grip pan pansel zoom-in zoom-out zoom-full zoom-sel zoom-layer zoom-native! zoom-last zoom-next! mapview map3d bookmark-new bookmarks clock refresh grip identify table abacus gear sigma measure v tip action! v textann v",
  "grip sources geopackage shapefile feather memory | virtual | grip pencils! pencil save-edits! add-point! vertex! v multiedit! trash! cut! copy! paste! undo! redo! grip label diagram | label-pin label-red | label-pin! label-show! label-move! label-rotate! label-edit! grip metasearch grip python grip help grip reload",
  "grip select# v select-value v deselect v select-location"
];
const files = ["airports", "alaska", "builtups", "grassland", "lakes", "landice", "majrivers", "pipelines", "popp", "railroads", "regions", "rivers", "storagep", "swamp", "trails", "trees", "tundra"];
const icon = id => `<svg><use href="#${id}"/></svg>`;

function tools(list) {
  return list.split(" ").map(t => {
    if (t === "grip") return '<span class="grip"></span>';
    if (t === "|") return '<span class="sep"></span>';
    if (t === "v") return '<button class="more" aria-label="Więcej"></button>';
    const id = t.replace(/[!#]/, "");
    return `<button class="tool${t.endsWith("#") ? " pressed" : ""}" aria-label="${id}"${t.endsWith("!") ? " disabled" : ""}>${icon(id)}</button>`;
  }).join("");
}

document.querySelectorAll(".toolbars").forEach(el => {
  el.innerHTML = toolRows.map(r => `<div class="toolbar">${tools(r)}</div>`).join("");
});
document.querySelectorAll(".docks").forEach(el => {
  el.append(document.getElementById("docks-template").content.cloneNode(true));
  el.querySelector(".tree").innerHTML =
    `<li class="folder">${icon("folder")}raster</li><li class="folder opened-folder">${icon("folder")}shapefiles</li>` +
    files.map(f => f === "railroads" ? `<li class="chosen">${icon("shp-on")}${f}.shp</li>` : `<li>${icon("shp")}${f}.shp</li>`).join("") +
    `<li class="file">${icon("html")}README.html</li><li class="file">${icon("shp")}VEGDESC_Mixed Trees.shp</li><li class="base">${icon("grid")}bazyDanych.txt</li>`;
});
document.querySelectorAll("[data-tools]").forEach(el => { el.innerHTML = tools(el.dataset.tools); });
document.querySelectorAll("[data-apps]").forEach(el => {
  el.insertAdjacentHTML("afterbegin", el.dataset.apps.split(" ").map(a => {
    const id = a.replace(/[*@]/, "");
    return `<button class="app${a.endsWith("*") ? " running" : a.endsWith("@") ? " front" : ""}" aria-label="${id}">${icon(id)}</button>`;
  }).join(""));
});
```
